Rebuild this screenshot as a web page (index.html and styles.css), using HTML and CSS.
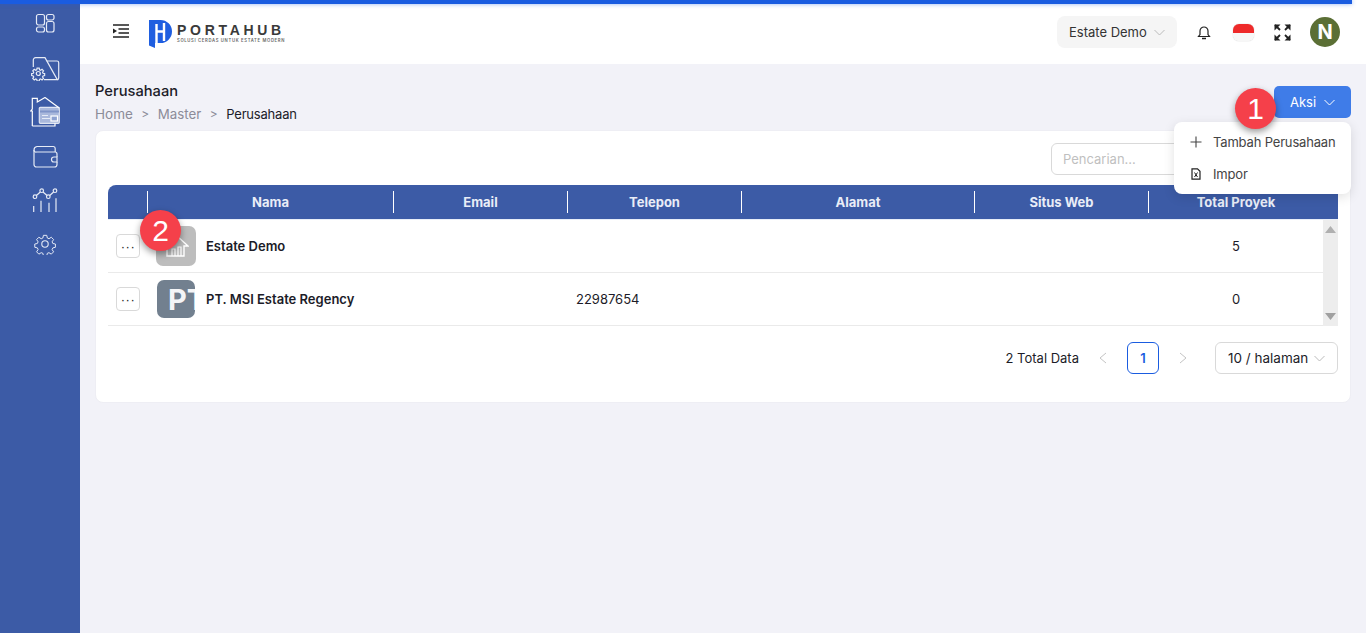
FILE: index.html
```html
<!DOCTYPE html>
<html lang="en">
<head>
    <meta charset="UTF-8">
    <meta name="viewport" content="width=device-width, initial-scale=1.0">
    <title>Perusahaan</title>
    <link rel="stylesheet" href="styles.css">
</head>
<body>
    <div class="progress"></div>
    <div class="app">
        <aside class="sidebar">
            <svg class="nav-icon" width="20" height="20" viewBox="0 0 20 20"><rect x="1.500" y="1.500" width="8" height="10.500" rx="2"/><rect x="1.500" y="14" width="8" height="5" rx="2"/><rect x="11.500" y="1.500" width="7.500" height="5.500" rx="2"/><rect x="11.500" y="8.500" width="7.500" height="10.500" rx="2"/></svg>
            <svg class="nav-icon nav-icon-b" width="29" height="24" viewBox="0 0 29 24"><path d="M2.300 10V3a2.300 2.300 0 0 1 2.300-2.300H14L26.300 22.700H13"/><path d="M15.700 4H26a1.700 1.700 0 0 1 1.700 1.700V21a1.700 1.700 0 0 1-1.700 1.700"/><path class="gear" d="M10 1.500h4l.7 3.200 2 .9 2.800-1.800 2.800 2.800-1.800 2.800.9 2 3.100.6v4l-3.100.7-.9 2 1.800 2.800-2.800 2.800-2.800-1.800-2 .8-.7 3.200h-4l-.7-3.200-2-.8-2.800 1.800-2.800-2.800 1.800-2.800-.9-2-3.100-.7v-4l3.100-.6.9-2-1.800-2.800 2.800-2.800 2.800 1.800 2-.9z" transform="translate(.9 10.300) scale(.52)"/><circle cx="7.300" cy="16.500" r="2"/></svg>
            <svg class="nav-icon nav-icon-c" width="31" height="30" viewBox="0 0 31 30"><rect x="9.300" y="10.300" width="20" height="16" rx="1" class="fill"/><path class="bright" d="M2.300 29V14H.7l1.600-2V1.300h5V5L15 .5 29.300 11M2.300 29H25v-2.700"/><path class="dark" d="M10 14.500h19"/><path d="M12 18.500h6M12 21.500h8"/><rect x="21" y="19" width="6.500" height="5" class="fill2"/></svg>
            <svg class="nav-icon nav-icon-d" width="25" height="23" viewBox="0 0 25 23"><path d="M1 5a3.500 3.500 0 0 1 3-3.500h16.500a2 2 0 0 1 1.700 2V7"/><path d="M1 5v14.500A2.500 2.500 0 0 0 3.500 22h18a2.500 2.500 0 0 0 2.500-2.500V17"/><path d="M1 5a2 2 0 0 0 2.500 2h18.500a2 2 0 0 1 2 2v3"/><path d="M24 12h-3a2.500 2.500 0 0 0 0 5h3z"/></svg>
            <svg class="nav-icon nav-icon-e" width="26" height="25" viewBox="0 0 26 25"><circle cx="3" cy="8.700" r="1.800"/><circle cx="9.700" cy="2.700" r="1.800"/><circle cx="16.300" cy="8.700" r="1.800"/><circle cx="23" cy="2.700" r="1.800"/><path d="M4.400 7.500 8.300 4M11 4l4 3.500M17.700 7.500 21.600 4M1.700 18v6M9 12.700V24M17 14.700V24M24 10.300V24"/></svg>
            <svg class="nav-icon nav-icon-f" width="22" height="22" viewBox="0 0 24 24"><path d="M10 1.500h4l.7 3.200 2 .9 2.800-1.800 2.800 2.800-1.800 2.800.9 2 3.100.6v4l-3.100.7-.9 2 1.800 2.800-2.800 2.800-2.800-1.800-2 .8-.7 3.200h-4l-.7-3.200-2-.8-2.800 1.800-2.800-2.800 1.800-2.800-.9-2-3.100-.7v-4l3.100-.6.9-2-1.800-2.800 2.800-2.800 2.800 1.800 2-.9z" transform="translate(1.300 1.200) scale(.9)"/><circle cx="12" cy="12" r="3.500"/></svg>
        </aside>
        <div class="main">
            <header class="topbar">
                <svg class="menu-icon" width="16" height="14" viewBox="0 0 16 14"><path d="M0 1h16M5.500 5h10.500M5.500 9h10.500M0 13h16" stroke="#222" stroke-width="1.300" fill="none"/><path d="M0 4.500 4 7 0 9.500z" fill="#222"/></svg>
                <div class="logo">
                    <svg width="23" height="28" viewBox="0 0 23 28"><path d="M0 0h11.500a11.500 11.500 0 0 1 0 23H6v5l-6-2.500z" fill="#1f5ee0"/><path d="M7.500 4v20M15 3v18M7.500 11.500H15" stroke="#fff" stroke-width="2.400" fill="none"/></svg>
                    <div class="logo-text">
                        <div class="logo-name">PORTAHUB</div>
                        <div class="logo-sub">SOLUSI CERDAS UNTUK ESTATE MODERN</div>
                    </div>
                </div>
                <div class="topbar-right">
                    <div class="estate-select">Estate Demo
                        <svg class="chev" width="11" height="7" viewBox="0 0 11 7"><path d="M.5 1 5.500 6l5-5" stroke="#bbb" fill="none"/></svg>
                    </div>
                    <svg class="bell" width="14" height="15" viewBox="0 0 14 15"><path d="M1.500 11.500h11l-1.500-2V6a4 4 0 0 0-8 0v3.500z" fill="none" stroke="#222" stroke-width="1.200"/><path d="M5 13.500h4" stroke="#222" stroke-width="1.500"/></svg>
                    <div class="flag"></div>
                    <svg class="expand" width="17" height="17" viewBox="0 0 17 17"><path d="M1 1l5 5M16 1l-5 5M1 16l5-5M16 16l-5-5" stroke="#222" stroke-width="1.800"/><path d="M.5 .5h6l-6 6zM16.500 .5h-6l6 6zM.5 16.500h6l-6-6zM16.500 16.500h-6l6-6z" fill="#222"/></svg>
                    <div class="avatar">N</div>
                </div>
            </header>
            <main class="content">
                <div class="page-head">
                    <div>
                        <h1 class="page-title">Perusahaan</h1>
                        <div class="crumbs">
                            <span>Home</span><span class="sep">&gt;</span><span>Master</span><span class="sep">&gt;</span><span class="current">Perusahaan</span>
                        </div>
                    </div>
                    <button class="btn-aksi">Aksi
                        <svg width="11" height="7" viewBox="0 0 11 7"><path d="M.5 1 5.500 6l5-5" stroke="#fff" fill="none"/></svg>
                    </button>
                </div>
                <section class="card">
                    <div class="search-row">
                        <input class="search" type="text" placeholder="Pencarian...">
                    </div>
                    <div class="thead">
                        <div class="th"></div>
                        <div class="th">Nama</div>
                        <div class="th">Email</div>
                        <div class="th">Telepon</div>
                        <div class="th">Alamat</div>
                        <div class="th">Situs Web</div>
                        <div class="th">Total Proyek</div>
                        <div></div>
                    </div>
                    <div class="tbody">
                        <div class="rows">
                            <div class="row">
                                <div class="cell"><button class="btn-more">···</button></div>
                                <div class="cell cell-name">
                                    <div class="thumb thumb-home">
                                        <svg width="26" height="24" viewBox="0 0 26 24"><path d="M1 12 14 2l11 10h-4v10H4V12z" fill="none" stroke="#fff" stroke-width="1.400"/><path d="M9 22v-7h3v7M15 22v-9h3v9" fill="none" stroke="#fff" stroke-width="1.200"/></svg>
                                    </div>
                                    <span>Estate Demo</span>
                                </div>
                                <div class="cell"></div>
                                <div class="cell"></div>
                                <div class="cell"></div>
                                <div class="cell"></div>
                                <div class="cell cell-num">5</div>
                            </div>
                            <div class="row">
                                <div class="cell"><button class="btn-more">···</button></div>
                                <div class="cell cell-name">
                                    <div class="thumb thumb-text">PT</div>
                                    <span>PT. MSI Estate Regency</span>
                                </div>
                                <div class="cell"></div>
                                <div class="cell cell-phone">22987654</div>
                                <div class="cell"></div>
                                <div class="cell"></div>
                                <div class="cell cell-num">0</div>
                            </div>
                        </div>
                        <div class="scrollbar">
                            <svg width="11" height="7" viewBox="0 0 11 7"><path d="M5.500 0 11 7H0z" fill="#b0b0b0"/></svg>
                            <svg width="11" height="7" viewBox="0 0 11 7"><path d="M5.500 7 11 0H0z" fill="#a0a0a0"/></svg>
                        </div>
                    </div>
                    <div class="pager">
                        <span class="total">2 Total Data</span>
                        <svg class="page-arrow" width="8" height="12" viewBox="0 0 8 12"><path d="M7 1 1 6l6 5" stroke="#c4c4c4" fill="none"/></svg>
                        <span class="page-num">1</span>
                        <svg class="page-arrow" width="8" height="12" viewBox="0 0 8 12"><path d="M1 1l6 5-6 5" stroke="#c4c4c4" fill="none"/></svg>
                        <div class="page-size">10 / halaman
                            <svg width="11" height="7" viewBox="0 0 11 7"><path d="M.5 1 5.500 6l5-5" stroke="#bbb" fill="none"/></svg>
                        </div>
                    </div>
                </section>
            </main>
        </div>
    </div>

    <div class="dropdown">
        <div class="drop-item">
            <svg width="12" height="12" viewBox="0 0 12 12"><path d="M6 .5v11M.5 6h11" stroke="#444" stroke-width="1.100"/></svg>
            <span class="drop-label">Tambah Perusahaan</span>
        </div>
        <div class="drop-item">
            <svg width="12" height="12" viewBox="0 0 12 12"><path d="M2 .8h5.500L10 3.300v7.900H2z" fill="none" stroke="#222" stroke-width="1.200"/><path d="M4.500 4.500 7.500 9M7.500 4.500 4.500 9" stroke="#222"/></svg>
            <span class="drop-label">Impor</span>
        </div>
    </div>

    <div class="marker marker-one">1</div>
    <div class="marker marker-two">2</div>
</body>
</html>
```

FILE: styles.css
```css
* {
    box-sizing: border-box;
}
body {
    margin: 0;
    height: 633px;
    overflow: hidden;
    background-color: #f2f2f8;
    font-family: Inter, "Noto Sans", sans-serif;
    font-size: 13px;
    color: #1c1c28;
}
.progress {
    position: absolute;
    top: 0;
    left: 0;
    width: 1352px;
    height: 4px;
    background-color: #1a5ce0;
    box-shadow: 0 0 4px rgba(26, 92, 224, 0.5);
    z-index: 5;
}
.app {
    display: flex;
    height: 633px;
}
.sidebar {
    width: 80px;
    flex: none;
    display: flex;
    flex-direction: column;
    align-items: center;
    padding: 13px 0 0 10px;
    background-color: #3c5ba6;
}
.nav-icon {
    fill: none;
    stroke: #e6ebf6;
    stroke-width: 1.200;
    display: block;
}
.nav-icon .gear {
    vector-effect: non-scaling-stroke;
    fill: #3c5ba6;
}
.nav-icon-b {
    margin-top: 24px;
}
.nav-icon-c {
    margin-top: 16px;
}
.nav-icon-c .bright {
    stroke: #fff;
}
.nav-icon-c .fill {
    fill: #a9b8dc;
    stroke: #dfe5f3;
}
.nav-icon-c .dark {
    stroke: #7f94c8;
    stroke-width: 2;
}
.nav-icon-c .fill2 {
    fill: #8ea2d1;
    stroke: #fff;
}
.nav-icon-d {
    margin-top: 18px;
}
.nav-icon-e {
    margin-top: 20px;
}
.nav-icon-f {
    margin-top: 20px;
}
.main {
    flex: 1;
    min-width: 0;
    display: flex;
    flex-direction: column;
}
.topbar {
    height: 64px;
    flex: none;
    padding: 0 26px 0 33px;
    display: flex;
    align-items: center;
    background-color: #fff;
}
.menu-icon {
    margin-top: -2px;
}
.logo {
    display: flex;
    align-items: center;
    margin-left: 20px;
    margin-top: 3px;
    gap: 5px;
}
.logo-name {
    font-family: "Liberation Sans", sans-serif;
    font-size: 14px;
    font-weight: 700;
    letter-spacing: 3.700px;
    line-height: 14px;
    color: #3a3a3a;
}
.logo-sub {
    margin-top: 1px;
    font-size: 4.200px;
    font-weight: 600;
    letter-spacing: 0.680px;
    line-height: 6px;
    white-space: nowrap;
    color: #666;
}
.topbar-right {
    margin-left: auto;
    display: flex;
    align-items: center;
}
.estate-select {
    width: 120px;
    height: 32px;
    padding: 0 12px;
    display: flex;
    align-items: center;
    justify-content: space-between;
    background-color: #f5f5f5;
    border-radius: 8px;
    color: #333;
}
.bell {
    margin-left: 20px;
}
.flag {
    width: 21px;
    height: 17px;
    margin-left: 22px;
    border-radius: 6px;
    background: linear-gradient(#ee2a2a 0 50%, #f7f7f7 50%);
    box-shadow: 0 0 1px rgba(0, 0, 0, 0.35);
}
.expand {
    margin-left: 20px;
}
.avatar {
    width: 30px;
    height: 30px;
    margin-left: 19px;
    border-radius: 50%;
    background-color: #5b6f35;
    color: #fff;
    font-size: 20px;
    font-weight: 700;
    display: flex;
    align-items: center;
    justify-content: center;
}
.content {
    padding: 18px 15px 0;
}
.page-head {
    height: 48px;
    display: flex;
    justify-content: space-between;
}
.page-title {
    margin: 0;
    font-size: 14.700px;
    font-weight: 500;
    line-height: 18px;
}
.crumbs {
    display: flex;
    margin-top: 6px;
    font-size: 13.500px;
    line-height: 16px;
    color: #8c8c99;
}
.crumbs .sep {
    margin: 0 8.500px;
    font-size: 12px;
}
.crumbs span:nth-child(3) {
    font-size: 13.300px;
}
.crumbs .current {
    font-size: 13px;
    letter-spacing: -0.200px;
    color: #1c1c28;
}
.btn-aksi {
    width: 77px;
    height: 32px;
    margin-top: 4px;
    border: none;
    border-radius: 5px;
    display: flex;
    align-items: center;
    justify-content: center;
    gap: 8px;
    background-color: #3f7ce8;
    color: #fff;
    font-family: inherit;
    font-size: 13px;
}
.card {
    height: 273px;
    padding: 12px 12px 0;
    background-color: #fff;
    border-radius: 8px;
    border: 1px solid #eeeef4;
}
.search-row {
    height: 42px;
}
.search {
    display: block;
    margin-left: 943px;
    width: 160px;
    height: 32px;
    padding: 0 11px;
    border: 1px solid #d9d9d9;
    border-radius: 6px;
    font-family: inherit;
    font-size: 13px;
}
.search::placeholder {
    color: #bfbfbf;
}
.thead, .row {
    display: grid;
    grid-template-columns: 40px 246px 174px 174px 233px 174px 174px;
}
.thead {
    grid-template-columns: 40px 246px 174px 174px 233px 174px 174px 15px;
    height: 34px;
    align-items: center;
    background-color: #3c5ba6;
    border-radius: 8px 8px 0 0;
    color: #e9edf7;
    font-weight: 700;
}
.th {
    height: 22px;
    line-height: 22px;
    text-align: center;
    border-right: 1px solid #fff;
}
.th:nth-child(7) {
    border-right: none;
}
.tbody {
    display: flex;
    border-top: 1px solid #e8eef8;
}
.rows {
    width: 1215px;
}
.row {
    height: 53px;
    align-items: center;
    border-bottom: 1px solid #eaeaea;
}
.cell-name {
    display: flex;
    align-items: center;
    font-weight: 600;
    color: #1c1c28;
}
.cell-name .thumb {
    margin-right: 10px;
}
.cell-num {
    text-align: center;
}
.cell-phone {
    padding-left: 8px;
}
.btn-more {
    display: block;
    width: 24px;
    height: 24px;
    margin-left: 8px;
    padding: 0;
    border: 1px solid #d9d9d9;
    border-radius: 4px;
    background-color: #fff;
    font-size: 13px;
    font-weight: 500;
    letter-spacing: 0.500px;
    color: #222;
}
.thumb {
    width: 40px;
    height: 40px;
    margin-left: 8px;
    border-radius: 7px;
    overflow: hidden;
    display: flex;
    align-items: center;
    justify-content: center;
}
.thumb-home {
    background-color: #bdbdbd;
}
.thumb-text {
    width: 38px;
    height: 38px;
    margin-left: 9px;
    margin-right: 11px !important;
    background-color: #72808f;
    color: #f4f5f7;
    font-size: 29px;
    font-weight: 700;
    justify-content: flex-start;
    padding-left: 11px;
    white-space: nowrap;
}
.scrollbar {
    width: 15px;
    height: 106px;
    padding: 6px 0;
    display: flex;
    flex-direction: column;
    align-items: center;
    justify-content: space-between;
    background-color: #ededed;
}
.pager {
    margin-top: 16px;
    display: flex;
    align-items: center;
    justify-content: flex-end;
}
.total {
    margin-right: 20px;
}
.page-num {
    width: 32px;
    height: 32px;
    margin: 0 20px;
    border: 1px solid #1a5ce0;
    border-radius: 6px;
    display: flex;
    align-items: center;
    justify-content: center;
    color: #1a5ce0;
    font-weight: 600;
}
.page-size {
    width: 123px;
    height: 32px;
    margin-left: 28px;
    padding: 0 12px;
    border: 1px solid #d9d9d9;
    border-radius: 6px;
    font-size: 13.500px;
    display: flex;
    align-items: center;
    justify-content: space-between;
}
.dropdown {
    position: absolute;
    left: 1174px;
    top: 122px;
    width: 177px;
    height: 72px;
    padding: 4px 0;
    background-color: #fff;
    border-radius: 8px;
    box-shadow: 0 3px 12px rgba(0, 0, 0, 0.12);
    z-index: 3;
}
.drop-item {
    height: 32px;
    padding-left: 16px;
    display: flex;
    align-items: center;
    gap: 11px;
    color: #444;
}
.drop-label {
    letter-spacing: -0.170px;
}
.marker {
    position: absolute;
    width: 41px;
    height: 41px;
    border-radius: 50%;
    background-color: #f5404a;
    box-shadow: 0 3px 7px rgba(0, 0, 0, 0.4);
    color: #fff;
    font-family: "Liberation Sans", sans-serif;
    font-size: 30px;
    line-height: 41px;
    text-align: center;
    z-index: 4;
}
.marker-one {
    left: 1235px;
    top: 88px;
}
.marker-two {
    left: 140px;
    top: 210px;
}
```
